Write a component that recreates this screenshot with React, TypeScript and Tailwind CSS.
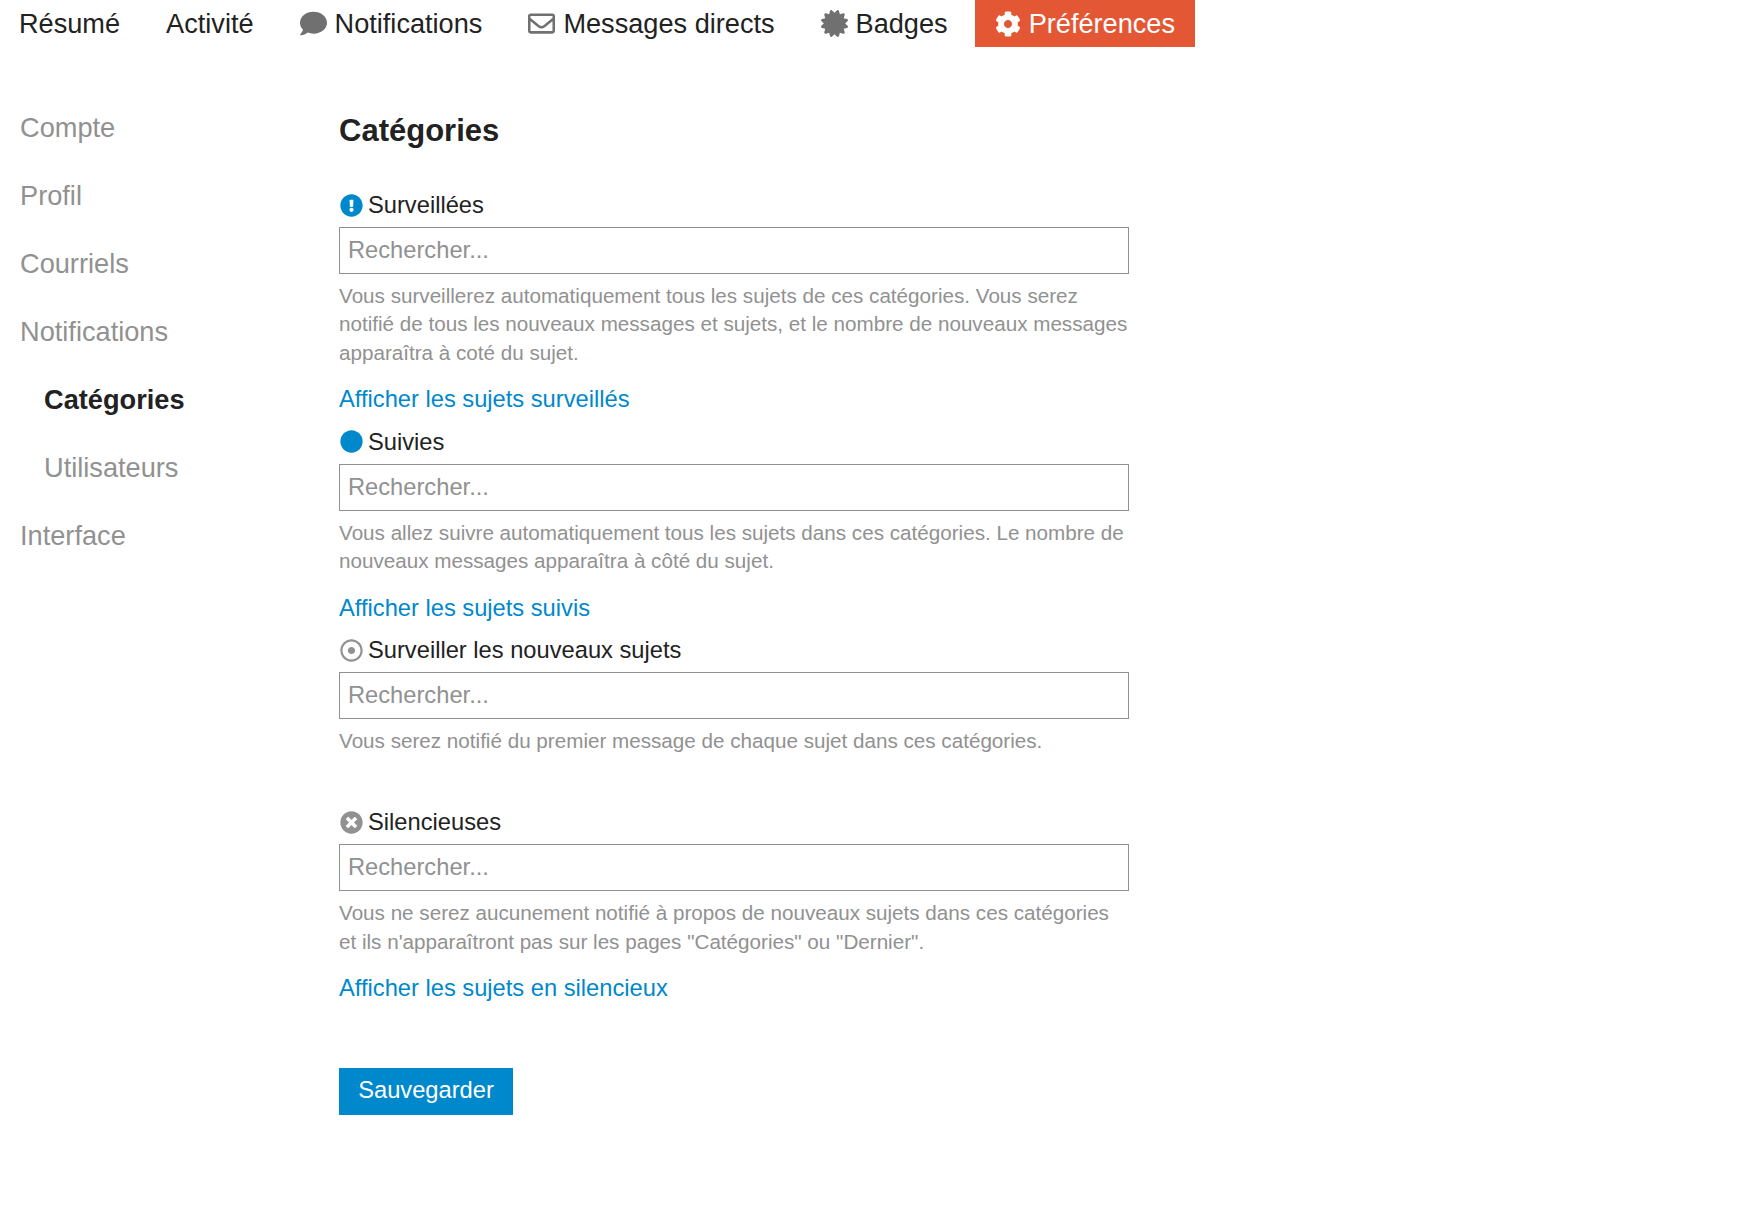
import React from 'react';
import {
  FaCertificate,
  FaCircle,
  FaCog,
  FaComment,
  FaExclamationCircle,
  FaRegDotCircle,
  FaRegEnvelope,
  FaTimesCircle,
} from 'react-icons/fa';

const categories = [
  {
    label: 'Surveillées',
    icon: <FaExclamationCircle className="text-[#0088cc]" />,
    lines: [
      'Vous surveillerez automatiquement tous les sujets de ces catégories. Vous serez',
      'notifié de tous les nouveaux messages et sujets, et le nombre de nouveaux messages',
      'apparaîtra à coté du sujet.',
    ],
    link: 'Afficher les sujets surveillés',
  },
  {
    label: 'Suivies',
    icon: <FaCircle className="text-[#0088cc]" />,
    lines: [
      'Vous allez suivre automatiquement tous les sujets dans ces catégories. Le nombre de',
      'nouveaux messages apparaîtra à côté du sujet.',
    ],
    link: 'Afficher les sujets suivis',
  },
  {
    label: 'Surveiller les nouveaux sujets',
    icon: <FaRegDotCircle className="text-[#919191]" />,
    lines: ['Vous serez notifié du premier message de chaque sujet dans ces catégories.'],
    link: '',
  },
  {
    label: 'Silencieuses',
    icon: <FaTimesCircle className="text-[#919191]" />,
    lines: [
      'Vous ne serez aucunement notifié à propos de nouveaux sujets dans ces catégories',
      'et ils n\'apparaîtront pas sur les pages "Catégories" ou "Dernier".',
    ],
    link: 'Afficher les sujets en silencieux',
  },
];

function NavItem({ icon, label }: { icon?: React.ReactNode; label: string }) {
  return (
    <a className="flex h-[47px] items-center gap-[8px] px-[19px] text-[#222222]">
      {icon && <span className="text-[27px] text-[#707070]">{icon}</span>}
      {label}
    </a>
  );
}

export default function App() {
  return (
    <div className="min-h-[1215px] bg-white font-['Liberation_Sans',Arial,sans-serif]">
      <nav className="flex gap-[8px] text-[27.15px] leading-none">
        <NavItem label="Résumé" />
        <NavItem label="Activité" />
        <NavItem icon={<FaComment />} label="Notifications" />
        <NavItem icon={<FaRegEnvelope />} label="Messages directs" />
        <NavItem icon={<FaCertificate />} label="Badges" />
        <a className="flex h-[47px] items-center gap-[8px] bg-[#e45735] pr-[20px] pl-[20px] text-white">
          <FaCog className="text-[26px]" />
          Préférences
        </a>
      </nav>

      <div className="flex">
        <aside className="w-[339px] shrink-0 pt-[47px] pl-[20px] text-[27.2px] leading-[68px] text-[#919191]">
          <div>Compte</div>
          <div>Profil</div>
          <div>Courriels</div>
          <div>Notifications</div>
          <div className="pl-[24px] font-bold text-[#222222]">Catégories</div>
          <div className="pl-[24px]">Utilisateurs</div>
          <div>Interface</div>
        </aside>

        <main className="w-[790px] pt-[65px]">
          <h2 className="text-[31px] leading-[38px] font-bold text-[#222222]">Catégories</h2>
          <div className="mt-[37px]">
            {categories.map((cat) => (
              <section key={cat.label} className="pb-[9.6px]">
                <div className="flex h-[38px] items-center gap-[5px] text-[23.7px] text-[#222222]">
                  <span className="-mt-[2px] flex w-[24px] justify-center text-[23px]">{cat.icon}</span>
                  {cat.label}
                </div>
                <div className="mt-[2px] flex h-[47px] items-center border border-[#919191] px-[8px] text-[23.7px] text-[#919191]">
                  Rechercher...
                </div>
                <div className="mt-[8px] text-[20.65px] leading-[28.4px] text-[#919191]">
                  {cat.lines.map((line) => (
                    <div key={line}>{line}</div>
                  ))}
                </div>
                {cat.link ? (
                  <div className="mt-[17px] h-[30px] text-[23.7px] leading-[30px] text-[#0088cc]">{cat.link}</div>
                ) : (
                  <div className="mt-[17px] h-[22px]" />
                )}
              </section>
            ))}
          </div>
          <button className="mt-[55px] h-[47px] w-[174px] bg-[#0088cc] text-[23.7px] text-white">Sauvegarder</button>
        </main>
      </div>
    </div>
  );
}
